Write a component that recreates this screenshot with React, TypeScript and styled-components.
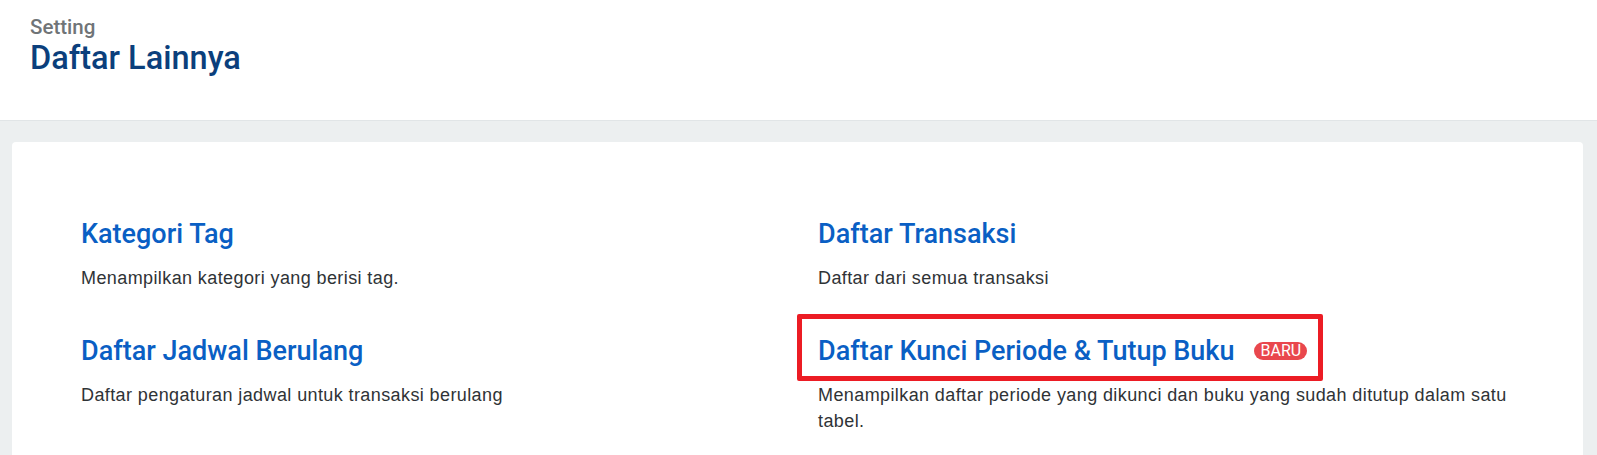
import React from "react";
import styled, { createGlobalStyle } from "styled-components";

const GlobalStyle = createGlobalStyle`
  html, body {
    margin: 0;
    padding: 0;
    background: #eceff0;
    font-family: Roboto, "Liberation Sans", Arial, sans-serif;
  }
`;

const Page = styled.div`
  height: 455px;
  overflow: hidden;
  background: #eceff0;
`;

const Header = styled.header`
  background: #ffffff;
  border-bottom: 1px solid #e1e5e7;
  height: 121px;
  box-sizing: border-box;
  padding: 15px 30px 0;
`;

const Crumb = styled.div`
  font-size: 20.5px;
  font-weight: 500;
  line-height: 25px;
  color: #707477;
`;

const PageTitle = styled.h1`
  margin: 0;
  font-size: 32.5px;
  font-weight: 500;
  line-height: 37px;
  color: #0b3f7c;
`;

const Body = styled.main`
  padding: 21px 14px 0 12px;
`;

const Card = styled.section`
  background: #ffffff;
  border-radius: 4px;
  min-height: 330px;
  padding: 76px 69px 20px;
  display: grid;
  grid-template-columns: 1fr 1fr;
  column-gap: 41px;
  row-gap: 44px;
  align-items: start;
  align-content: start;
`;

const Item = styled.div`
  display: flex;
  flex-direction: column;
  align-items: flex-start;
`;

const ItemTitle = styled.a<{ $highlight?: boolean }>`
  position: relative;
  display: inline-flex;
  align-items: center;
  font-size: 27px;
  font-weight: 500;
  line-height: 32px;
  color: #0a5fc4;
  text-decoration: none;
  margin-bottom: 15px;
  cursor: pointer;

  ${(p) =>
    p.$highlight &&
    `
    &::after {
      content: "";
      position: absolute;
      top: -21px;
      left: -21px;
      right: -16px;
      bottom: -14px;
      border: 5px solid #ec1c24;
      border-radius: 2px;
      pointer-events: none;
    }
  `}
`;

const Badge = styled.span`
  margin-left: 20px;
  height: 18px;
  padding: 0 6px;
  border-radius: 9px;
  background: #e9474d;
  color: #ffffff;
  font-size: 16px;
  font-weight: 400;
  line-height: 18px;
  display: inline-flex;
  align-items: center;
`;

const ItemDesc = styled.p`
  margin: 0;
  font-family: "Liberation Sans", Arial, sans-serif;
  font-size: 18px;
  letter-spacing: 0.4px;
  line-height: 26px;
  color: #2f3336;
`;

type Entry = { title: string; desc: string; isNew?: boolean };

const entries: Entry[] = [
  { title: "Kategori Tag", desc: "Menampilkan kategori yang berisi tag." },
  { title: "Daftar Transaksi", desc: "Daftar dari semua transaksi" },
  {
    title: "Daftar Jadwal Berulang",
    desc: "Daftar pengaturan jadwal untuk transaksi berulang",
  },
  {
    title: "Daftar Kunci Periode & Tutup Buku",
    desc: "Menampilkan daftar periode yang dikunci dan buku yang sudah ditutup dalam satu tabel.",
    isNew: true,
  },
];

const App: React.FC = () => {
  return (
    <Page>
      <GlobalStyle />
      <Header>
        <Crumb>Setting</Crumb>
        <PageTitle>Daftar Lainnya</PageTitle>
      </Header>
      <Body>
        <Card>
          {entries.map((e) => (
            <Item key={e.title}>
              <ItemTitle $highlight={e.isNew}>
                {e.title}
                {e.isNew && <Badge>BARU</Badge>}
              </ItemTitle>
              <ItemDesc>{e.desc}</ItemDesc>
            </Item>
          ))}
        </Card>
      </Body>
    </Page>
  );
};

export default App;
